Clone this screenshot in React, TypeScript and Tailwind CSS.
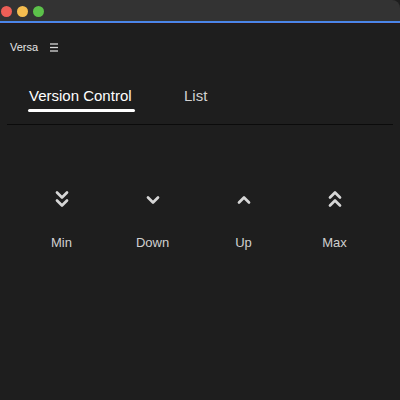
import React from 'react';

function Chevrons({ dir, double }: { dir: 'up' | 'down'; double?: boolean }) {
  // chevrons drawn in a 14x20 box so labels line up under every icon
  const down = (y: number) => `2,${y} 7,${y + 5} 12,${y}`;
  const up = (y: number) => `2,${y + 5} 7,${y} 12,${y + 5}`;
  const shape = dir === 'down' ? down : up;
  return (
    <svg width="14" height="20" viewBox="0 0 14 20" fill="none" stroke="#d6d6d6" strokeWidth="2.7" strokeLinecap="round" strokeLinejoin="round">
      {double ? (
        <>
          <polyline points={shape(2.5)} />
          <polyline points={shape(10.5)} />
        </>
      ) : (
        <polyline points={shape(7.5)} />
      )}
    </svg>
  );
}

export default function App() {
  const actions = [
    { label: 'Min', dir: 'down' as const, double: true },
    { label: 'Down', dir: 'down' as const, double: false },
    { label: 'Up', dir: 'up' as const, double: false },
    { label: 'Max', dir: 'up' as const, double: true },
  ];

  return (
    <div className="w-[400px] h-[400px] bg-[#1e1e1e] flex flex-col overflow-hidden" style={{ fontFamily: '"Liberation Sans", Arial, sans-serif' }}>
      {/* Title bar */}
      <div className="h-[21px] bg-[#333333] rounded-tr-[8px] flex items-center gap-[5px] pl-[1px] pt-[1px]">
        <span className="w-[11px] h-[11px] rounded-full bg-[#ee5f57]" />
        <span className="w-[11px] h-[11px] rounded-full bg-[#f5bd4f]" />
        <span className="w-[11px] h-[11px] rounded-full bg-[#5cc14a]" />
      </div>
      <div className="h-[2px] bg-[#4a86e8]" />
      <div className="h-[1px] bg-[#2a1616]" />

      {/* Header */}
      <div className="flex items-center gap-[12px] pl-[10px] pt-[10px] h-[37px]">
        <span className="text-[11px] text-[#e6e6e6] font-medium leading-none">Versa</span>
        <svg width="8" height="9" viewBox="0 0 8 9" stroke="#d8d8d8" strokeWidth="1.3">
          <line x1="0" y1="1" x2="8" y2="1" />
          <line x1="0" y1="4.5" x2="8" y2="4.5" />
          <line x1="0" y1="8" x2="8" y2="8" />
        </svg>
      </div>

      {/* Tabs */}
      <div className="flex gap-[49px] pl-[28px] pt-[26px]">
        <div className="flex flex-col items-start">
          <span className="text-[15px] leading-[18px] text-white px-[1px]">Version Control</span>
          <span className="mt-[4px] h-[2.5px] w-[107px] rounded-full bg-white" />
        </div>
        <span className="text-[15px] leading-[18px] text-[#d2d2d2]">List</span>
      </div>
      <div className="mx-[7px] mt-[12px] h-[1px] bg-[#0b0b0b]" />

      {/* Actions */}
      <div className="grid grid-cols-4 pl-[16px] pr-[20px] pt-[65px]">
        {actions.map((a) => (
          <button key={a.label} className="flex flex-col items-center gap-[26px]">
            <Chevrons dir={a.dir} double={a.double} />
            <span className="text-[13px] leading-none text-[#d0d0d0]">{a.label}</span>
          </button>
        ))}
      </div>
    </div>
  );
}
